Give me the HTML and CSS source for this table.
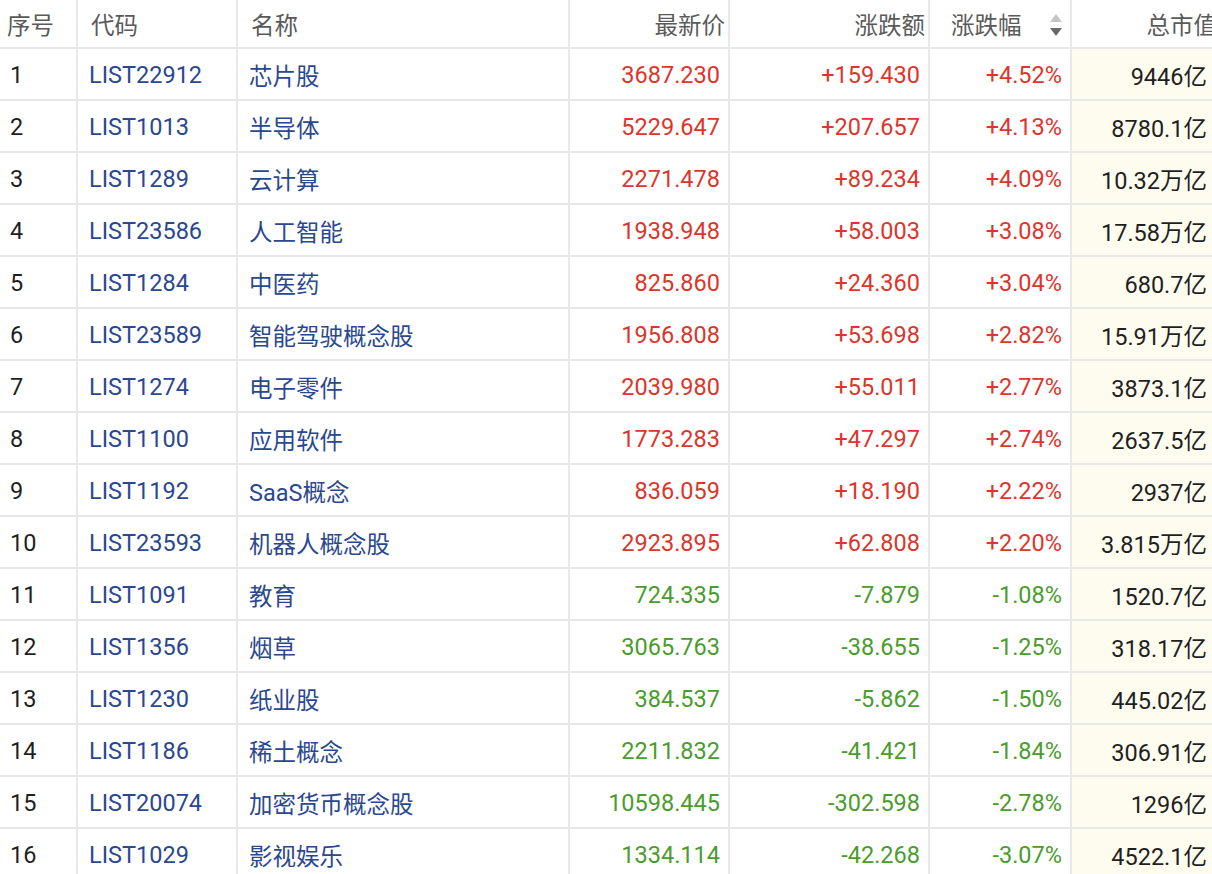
FILE: index.html
```html
<!DOCTYPE html>
<html lang="zh">
<head>
<meta charset="utf-8">
<link rel="stylesheet" href="styles.css">
</head>
<body>
<div class="table">
  <div class="row head">
    <div class="c c1">序号</div>
    <div class="c c2">代码</div>
    <div class="c c3">名称</div>
    <div class="c c4 r">最新价</div>
    <div class="c c5 r">涨跌额</div>
    <div class="c c6 sort"><span>涨跌幅</span>
      <svg class="sorticon" width="12" height="24" viewBox="0 0 12 24"><polygon points="6,0 12,8 0,8" fill="#c4c4c4"/><polygon points="0,14 12,14 6,22" fill="#6a6a6a"/></svg>
    </div>
    <div class="c c7 r">总市值</div>
  </div>
  <div class="row up"><div class="c c1">1</div><div class="c c2">LIST22912</div><div class="c c3">芯片股</div><div class="c c4 r">3687.230</div><div class="c c5 r">+159.430</div><div class="c c6 r">+4.52%</div><div class="c c7 r">9446亿</div></div>
  <div class="row up"><div class="c c1">2</div><div class="c c2">LIST1013</div><div class="c c3">半导体</div><div class="c c4 r">5229.647</div><div class="c c5 r">+207.657</div><div class="c c6 r">+4.13%</div><div class="c c7 r">8780.1亿</div></div>
  <div class="row up"><div class="c c1">3</div><div class="c c2">LIST1289</div><div class="c c3">云计算</div><div class="c c4 r">2271.478</div><div class="c c5 r">+89.234</div><div class="c c6 r">+4.09%</div><div class="c c7 r">10.32万亿</div></div>
  <div class="row up"><div class="c c1">4</div><div class="c c2">LIST23586</div><div class="c c3">人工智能</div><div class="c c4 r">1938.948</div><div class="c c5 r">+58.003</div><div class="c c6 r">+3.08%</div><div class="c c7 r">17.58万亿</div></div>
  <div class="row up"><div class="c c1">5</div><div class="c c2">LIST1284</div><div class="c c3">中医药</div><div class="c c4 r">825.860</div><div class="c c5 r">+24.360</div><div class="c c6 r">+3.04%</div><div class="c c7 r">680.7亿</div></div>
  <div class="row up"><div class="c c1">6</div><div class="c c2">LIST23589</div><div class="c c3">智能驾驶概念股</div><div class="c c4 r">1956.808</div><div class="c c5 r">+53.698</div><div class="c c6 r">+2.82%</div><div class="c c7 r">15.91万亿</div></div>
  <div class="row up"><div class="c c1">7</div><div class="c c2">LIST1274</div><div class="c c3">电子零件</div><div class="c c4 r">2039.980</div><div class="c c5 r">+55.011</div><div class="c c6 r">+2.77%</div><div class="c c7 r">3873.1亿</div></div>
  <div class="row up"><div class="c c1">8</div><div class="c c2">LIST1100</div><div class="c c3">应用软件</div><div class="c c4 r">1773.283</div><div class="c c5 r">+47.297</div><div class="c c6 r">+2.74%</div><div class="c c7 r">2637.5亿</div></div>
  <div class="row up"><div class="c c1">9</div><div class="c c2">LIST1192</div><div class="c c3">SaaS概念</div><div class="c c4 r">836.059</div><div class="c c5 r">+18.190</div><div class="c c6 r">+2.22%</div><div class="c c7 r">2937亿</div></div>
  <div class="row up"><div class="c c1">10</div><div class="c c2">LIST23593</div><div class="c c3">机器人概念股</div><div class="c c4 r">2923.895</div><div class="c c5 r">+62.808</div><div class="c c6 r">+2.20%</div><div class="c c7 r">3.815万亿</div></div>
  <div class="row down"><div class="c c1">11</div><div class="c c2">LIST1091</div><div class="c c3">教育</div><div class="c c4 r">724.335</div><div class="c c5 r">-7.879</div><div class="c c6 r">-1.08%</div><div class="c c7 r">1520.7亿</div></div>
  <div class="row down"><div class="c c1">12</div><div class="c c2">LIST1356</div><div class="c c3">烟草</div><div class="c c4 r">3065.763</div><div class="c c5 r">-38.655</div><div class="c c6 r">-1.25%</div><div class="c c7 r">318.17亿</div></div>
  <div class="row down"><div class="c c1">13</div><div class="c c2">LIST1230</div><div class="c c3">纸业股</div><div class="c c4 r">384.537</div><div class="c c5 r">-5.862</div><div class="c c6 r">-1.50%</div><div class="c c7 r">445.02亿</div></div>
  <div class="row down"><div class="c c1">14</div><div class="c c2">LIST1186</div><div class="c c3">稀土概念</div><div class="c c4 r">2211.832</div><div class="c c5 r">-41.421</div><div class="c c6 r">-1.84%</div><div class="c c7 r">306.91亿</div></div>
  <div class="row down"><div class="c c1">15</div><div class="c c2">LIST20074</div><div class="c c3">加密货币概念股</div><div class="c c4 r">10598.445</div><div class="c c5 r">-302.598</div><div class="c c6 r">-2.78%</div><div class="c c7 r">1296亿</div></div>
  <div class="row down"><div class="c c1">16</div><div class="c c2">LIST1029</div><div class="c c3">影视娱乐</div><div class="c c4 r">1334.114</div><div class="c c5 r">-42.268</div><div class="c c6 r">-3.07%</div><div class="c c7 r">4522.1亿</div></div>
</div>
</body>
</html>
```

FILE: styles.css
```css
html, body {
  margin: 0;
  padding: 0;
  background: #ffffff;
  overflow: hidden;
}
body {
  font-family: Roboto, "Noto Sans CJK SC", sans-serif;
  font-size: 23.5px;
  color: #1f1f1f;
}
.table {
  width: 1217px;
}
.row {
  display: grid;
  grid-template-columns: 78px 160px 332px 160px 200px 142px 145px;
  height: 52px;
  border-bottom: 2px solid #e8e8e8;
  box-sizing: border-box;
}
.row.head {
  height: 49px;
  color: #5a5a5a;
}
.c {
  display: flex;
  align-items: center;
  border-right: 2px solid #e8e8e8;
  box-sizing: border-box;
  white-space: nowrap;
  overflow: hidden;
  padding-top: 2px;
}
.head .c { padding-top: 0; }
.c7 { border-right: none; }
.c1 { padding-left: 10px; }
.head .c1 { padding-left: 7px; }
.c2, .c3 { padding-left: 11px; }
.head .c2 { padding-left: 13px; }
.head .c3 { padding-left: 13px; }
.r { justify-content: flex-end; padding-right: 8px; }
.head .r { padding-right: 3px; }
.c7.r { padding-right: 10px; }
.head .c7.r { padding-right: 0; }
.row:not(.head) .c2,
.row:not(.head) .c3 { color: #2a4890; }
.row:not(.head) .c7 { background: #fdfcef; }
.up .c4, .up .c5, .up .c6 { color: #dc362c; }
.down .c4, .down .c5, .down .c6 { color: #4b9c2e; }
.sort {
  justify-content: space-between;
  padding-left: 21px;
  padding-right: 8px;
}
.sorticon { display: block; margin-top: 4px; }
```
